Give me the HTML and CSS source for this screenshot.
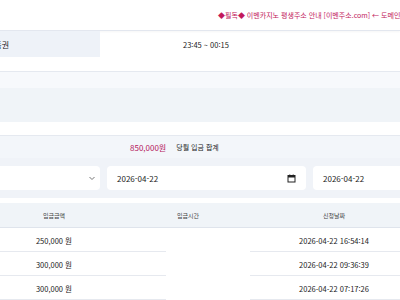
FILE: index.html
```html
<!DOCTYPE html>
<html lang="ko">
<head>
  <meta charset="UTF-8">
  <meta name="viewport" content="width=device-width, initial-scale=1.0">
  <title>입금내역</title>
  <link rel="stylesheet" href="styles.css">
</head>
<body>

  <!-- 상단 공지 -->
  <div class="topbar">
    <span class="notice">◆필독◆ 이벤카지노 평생주소 안내 [이벤주소.com] ← 도메인 검색 후 접속</span>
  </div>

  <!-- 상품 정보 -->
  <div class="info-row">
    <div class="info-label">상품권</div>
    <div class="info-value">23:45 ~ 00:15</div>
  </div>

  <div class="panel">
    <div class="panel-head"></div>
    <div class="panel-body"></div>
  </div>

  <!-- 합계 -->
  <div class="summary">
    <span class="sum-amount">850,000원</span>
    <span class="sum-label">당월 입금 합계</span>
  </div>

  <!-- 검색 필터 -->
  <div class="filters">
    <div class="field select">
      <span></span>
      <svg width="8" height="8" viewBox="0 0 8 8"><path d="M1.5 3l2.5 2.5L6.5 3" fill="none" stroke="#777" stroke-width="1"/></svg>
    </div>
    <div class="field date">
      <span>2026-04-22</span>
      <svg width="9" height="9" viewBox="0 0 9 9"><rect x="1" y="1.5" width="7" height="6.5" fill="none" stroke="#222" stroke-width="1"/><rect x="1" y="1.5" width="7" height="2" fill="#222"/><path d="M2.8 0.5v1.5M6.2 0.5v1.5" stroke="#222" stroke-width="1"/></svg>
    </div>
    <div class="field date-end">
      <span>2026-04-22</span>
    </div>
  </div>

  <!-- 입금 목록 -->
  <div class="table">
    <div class="thead">
      <div>입금금액</div>
      <div>입금시간</div>
      <div>신청날짜</div>
    </div>
    <div class="trow">
      <div>250,000 원</div>
      <div></div>
      <div>2026-04-22 16:54:14</div>
    </div>
    <div class="trow">
      <div>300,000 원</div>
      <div></div>
      <div>2026-04-22 09:36:39</div>
    </div>
    <div class="trow">
      <div>300,000 원</div>
      <div></div>
      <div>2026-04-22 07:17:26</div>
    </div>
  </div>

</body>
</html>
```

FILE: styles.css
```css
* {
  margin: 0;
  padding: 0;
  box-sizing: border-box;
}

body {
  font-family: "Noto Sans CJK KR", "Noto Sans", sans-serif;
  font-size: 8px;
  color: #222;
  background-color: #fff;
  overflow: hidden;
}

/* 상단 공지 */
.topbar {
  height: 31px;
  padding-left: 218px;
  display: flex;
  align-items: center;
  border-bottom: 1px solid #e3e7ef;
  box-shadow: 0 1px 2px rgba(0, 0, 0, 0.04);
  overflow: hidden;
  white-space: nowrap;
}

.notice {
  color: #c2185b;
  font-size: 7px;
}

/* 상품 정보 */
.info-row {
  height: 26px;
  display: flex;
  align-items: stretch;
}

.info-label {
  width: 100px;
  background-color: #eef2f8;
  display: flex;
  align-items: center;
  text-indent: -13px;
  overflow: hidden;
  white-space: nowrap;
}

.info-value {
  padding-left: 83px;
  display: flex;
  align-items: center;
  font-size: 7.5px;
}

.panel {
  margin-top: 14px;
  border-top: 1px solid #e5e9f0;
}

.panel-head {
  height: 16px;
  background-color: #f7f9fc;
}

.panel-body {
  height: 34px;
  background-color: #f0f4f8;
}

/* 합계 */
.summary {
  margin-top: 13px;
  height: 23px;
  border-top: 1px solid #e5e9f0;
  background-color: #f3f6fa;
  display: flex;
  align-items: center;
  padding-left: 130px;
  gap: 10px;
}

.sum-amount {
  color: #b5175c;
}

.sum-label {
  font-size: 7px;
}

/* 검색 필터 */
.filters {
  height: 40px;
  background-color: #f0f3f8;
  display: flex;
  gap: 7px;
  padding-top: 8px;
}

.field {
  height: 24px;
  background-color: #fff;
  border-radius: 4px;
  display: flex;
  align-items: center;
  justify-content: space-between;
  padding: 0 10px;
}

.select {
  width: 100px;
  border-radius: 0 4px 4px 0;
  padding-right: 4px;
}

.date {
  width: 199px;
  padding-right: 10px;
}

.date-end {
  flex: 1;
  border-radius: 4px 0 0 4px;
}

/* 입금 목록 */
.table {
  margin-top: 5px;
}

.thead,
.trow {
  display: grid;
  grid-template-columns: 108px 160px 1fr;
  text-align: center;
  align-items: center;
}

.thead {
  height: 25px;
  background-color: #f0f4f8;
  border-bottom: 1px solid #dfe4ec;
  color: #444;
  font-size: 6px;
}

.trow {
  height: 24px;
  font-size: 7.5px;
  background-image: linear-gradient(to right, #e6e9ef 166px, transparent 166px, transparent 250px, #e6e9ef 250px);
  background-size: 100% 1px;
  background-position: bottom;
  background-repeat: no-repeat;
}
```
